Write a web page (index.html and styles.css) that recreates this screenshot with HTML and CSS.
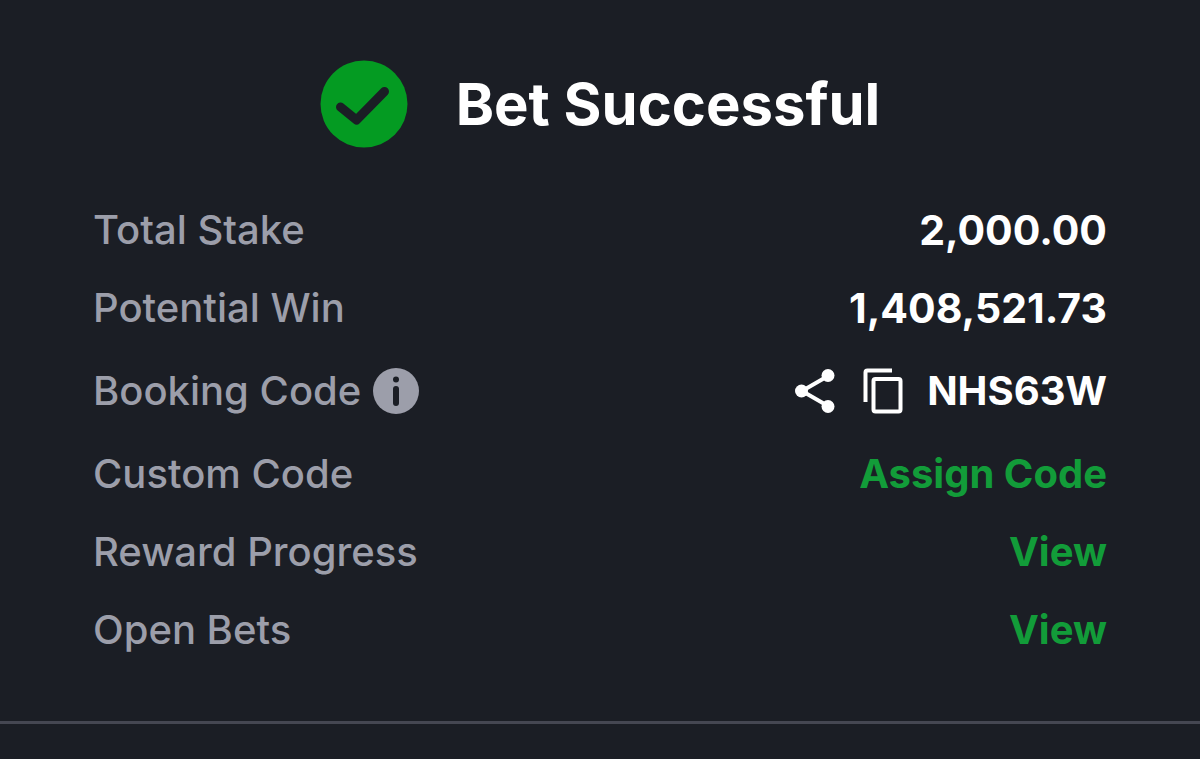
FILE: index.html
```html
<!DOCTYPE html>
<html lang="en">
<head>
    <meta charset="UTF-8">
    <meta name="viewport" content="width=device-width, initial-scale=1">
    <title>Bet Successful</title>
    <link rel="stylesheet" href="styles.css">
</head>
<body>
<main class="result">
    <header class="header">
        <svg class="check" viewBox="0 0 88 88" aria-hidden="true">
            <circle cx="44" cy="44" r="43.5"/>
            <path d="M20.500 47L36.500 60L64.500 31.500"/>
        </svg>
        <h1>Bet Successful</h1>
    </header>

    <dl class="details">
        <div class="row">
            <dt>Total Stake</dt>
            <dd class="amount">2,000.00</dd>
        </div>
        <div class="row">
            <dt>Potential Win</dt>
            <dd class="amount">1,408,521.73</dd>
        </div>
        <div class="row booking">
            <dt>
                Booking Code
                <button class="icon-btn" type="button" aria-label="About booking code">
                    <svg class="info" viewBox="0 0 46 46">
                        <circle class="disc" cx="23" cy="23" r="23"/>
                        <circle class="mark" cx="23" cy="11.500" r="3"/>
                        <rect class="mark" x="20" y="18" width="6" height="20" rx="3"/>
                    </svg>
                </button>
            </dt>
            <dd>
                <button class="icon-btn share" type="button" aria-label="Share">
                    <svg viewBox="0 0 40 46">
                        <path d="M33 8L7 23L33 38"/>
                        <circle cx="6.500" cy="23" r="6.500"/>
                        <circle cx="33" cy="7.500" r="6.500"/>
                        <circle cx="33" cy="38.500" r="6.500"/>
                    </svg>
                </button>
                <button class="icon-btn copy" type="button" aria-label="Copy">
                    <svg viewBox="0 0 40 46">
                        <path d="M2.500 34V4.500Q2.500 2.500 4.500 2.500H29"/>
                        <rect x="10.500" y="11" width="27" height="32.500" rx="2"/>
                    </svg>
                </button>
                <span>NHS63W</span>
            </dd>
        </div>
        <div class="row">
            <dt>Custom Code</dt>
            <dd><a href="#">Assign Code</a></dd>
        </div>
        <div class="row">
            <dt>Reward Progress</dt>
            <dd><a href="#">View</a></dd>
        </div>
        <div class="row">
            <dt>Open Bets</dt>
            <dd><a href="#">View</a></dd>
        </div>
    </dl>
</main>
</body>
</html>
```
FILE: styles.css
```css
* {
    margin: 0;
    padding: 0;
    box-sizing: border-box;
}
body {
    background-color: #1b1e25;
    font-family: Inter, "Liberation Sans", sans-serif;
    color: #fff;
}
.result {
    padding: 60px 93px 67px;
    border-bottom: 3px solid #454752;
}

/* title */
.header {
    display: flex;
    justify-content: center;
    align-items: center;
    gap: 48px;
    margin-bottom: 58px;
}
.header h1 {
    font-size: 58px;
    line-height: 72px;
    font-weight: 700;
}
.check {
    width: 88px;
    height: 88px;
    fill: #049b22;
}
.check path {
    fill: none;
    stroke: #1b1e25;
    stroke-width: 9;
    stroke-linecap: round;
    stroke-linejoin: round;
}

/* rows */
.details {
    display: flex;
    flex-direction: column;
    gap: 30px;
    font-size: 40px;
    line-height: 48px;
}
.row {
    display: flex;
    justify-content: space-between;
    align-items: center;
}
.row dt,
.row dd {
    display: flex;
    align-items: center;
}
.row dt {
    color: #9c9eaa;
    font-weight: 500;
}
.row dd {
    font-weight: 700;
}
.row .amount {
    font-size: 41px;
}
.row a {
    color: #129c39;
    text-decoration: none;
}

.booking {
    height: 58px;
}
.booking dt {
    gap: 12px;
}
.icon-btn {
    display: flex;
    border: 0;
    background: none;
    color: #fff;
    cursor: pointer;
}
.icon-btn svg {
    width: 40px;
    height: 46px;
}
.icon-btn .info {
    width: 46px;
}
.disc {
    fill: #9c9eaa;
}
.mark {
    fill: #1b1e25;
}
.share {
    margin-right: 28px;
    fill: #fff;
}
.share path,
.copy svg {
    fill: none;
    stroke: #fff;
    stroke-width: 4;
}
.copy {
    margin-right: 24px;
}
```
